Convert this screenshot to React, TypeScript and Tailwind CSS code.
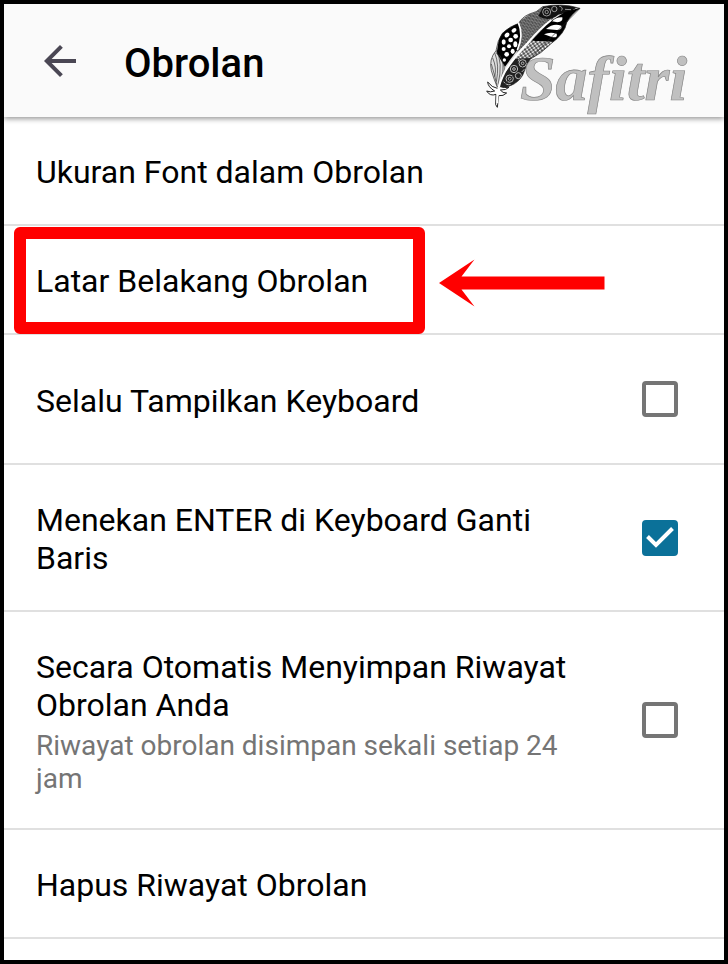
import React from 'react'
import { MdArrowBack } from 'react-icons/md'


interface SettingProps {
  title: string
  children?: React.ReactNode
}

interface CheckSettingProps {
  id: string
  title: string
  note?: string
  checked?: boolean
}

const Logo: React.FC = () => (
  <svg viewBox="36 12 648 339" className="h-[113px] w-[216px] shrink-0" role="img" aria-label="Safitri">
    <defs>
      <pattern id="scales" width="10" height="8" patternUnits="userSpaceOnUse" patternTransform="rotate(-35)">
        <rect width="10" height="8" fill="#444" />
        <ellipse cx="5" cy="4" rx="4" ry="3" fill="#fff" />
      </pattern>
      <pattern id="waves" width="11" height="9" patternUnits="userSpaceOnUse" patternTransform="rotate(15)">
        <rect width="11" height="9" fill="#8c8c8c" />
        <path d="M0 3Q3 -2 6 4T11 3M0 8Q4 4 11 8" fill="none" stroke="#333" strokeWidth="2" />
      </pattern>
      <clipPath id="vane">
        <path d="M330 25Q275 8 218 20Q200 38 178 42Q155 52 146 70Q120 78 97 100Q82 122 78 152Q56 178 64 212Q72 238 82 262L92 265Q140 258 158 226Q165 205 180 178Q215 160 242 132Q285 100 290 68Q305 40 330 25Z" />
      </clipPath>
    </defs>
    {/* feather */}
    <g clipPath="url(#vane)">
      <rect x="40" y="10" width="300" height="270" fill="#dedede" />
      <path d="M218 15L146 65Q158 105 140 158L200 105L250 55Z" fill="url(#waves)" />
      <path d="M145 68L90 95L80 160L105 200L142 150Q158 105 145 68Z" fill="#000" />
      <path d="M340 10L225 10L205 48Q235 68 265 44L300 35Z" fill="#111" />
      <path d="M184 122L238 66L285 36L340 20L300 90L252 126Z" fill="#000" />
      <path d="M184 122L252 126L215 170L175 182L136 176Z" fill="url(#scales)" />
      <path d="M136 176L182 174L165 225L140 260L86 270L96 230Z" fill="#222" />
      <g fill="#fff">
        <ellipse cx="132" cy="91" rx="8" ry="6" transform="rotate(-35 132 91)" />
        <ellipse cx="111" cy="105" rx="8" ry="6" transform="rotate(-45 111 105)" />
        <circle cx="137" cy="109" r="7" />
        <circle cx="122" cy="120" r="7" />
        <ellipse cx="101" cy="126" rx="6" ry="8" />
        <ellipse cx="136" cy="133" rx="6" ry="9" />
        <circle cx="117" cy="139" r="6" />
        <circle cx="101" cy="147" r="6" />
        <ellipse cx="128" cy="154" rx="6" ry="8" />
        <circle cx="110" cy="163" r="7" />
        <circle cx="103" cy="180" r="5" />
        <path d="M246 64Q259 51 277 52Q280 65 262 67Z" />
        <path d="M228 87Q250 68 274 77Q279 89 260 90Z" />
        <path d="M222 103Q240 94 260 101Q264 115 245 111Z" />
      </g>
      <g fill="none" stroke="#999" strokeWidth="3">
        <circle cx="230" cy="36" r="12" />
        <circle cx="230" cy="36" r="5" />
        <circle cx="253" cy="27" r="8" />
        <path d="M267 18Q282 22 274 32M285 28L303 29" />
      </g>
      <g fill="none" stroke="#bbb" strokeWidth="3">
        <circle cx="158" cy="190" r="11" />
        <circle cx="158" cy="190" r="4" />
        <circle cx="132" cy="207" r="11" />
        <circle cx="132" cy="207" r="4" />
        <circle cx="145" cy="227" r="9" />
        <circle cx="119" cy="236" r="11" />
        <circle cx="119" cy="236" r="4" />
        <path d="M144 173Q150 180 145 184M164 207L155 216M101 245Q108 256 122 254" />
      </g>
      <path d="M78 150Q100 186 84 254M74 158Q89 195 79 245M68 174Q81 204 74 230M88 164Q107 190 94 236M64 192Q74 223 82 262M101 193Q108 212 91 250" fill="none" stroke="#333" strokeWidth="2" />
    </g>
    <path d="M330 25Q275 8 218 20Q200 38 178 42Q155 52 146 70Q120 78 97 100Q82 122 78 152Q56 178 64 212Q72 238 82 262M92 265Q140 258 158 226Q165 205 180 178Q215 160 242 132Q285 100 290 68Q305 40 330 25Z" fill="none" stroke="#222" strokeWidth="2" />
    <path d="M145 68Q162 105 142 150" fill="none" stroke="#fff" strokeWidth="5" />
    <path d="M82 265Q66 263 53 246Q54 261 74 273Q60 278 50 273Q60 290 78 283L77 314L82 322L86 287Q100 289 110 279Q98 280 91 270Q108 271 117 262Q104 264 91 260Z" fill="#fff" stroke="#222" strokeWidth="3" />
    <path d="M82 310Q81 265 97 231Q116 188 172 130Q212 84 244 60" fill="none" stroke="#fff" strokeWidth="6" />
    {/* wordmark */}
    <text x="150" y="300" fontFamily="'Liberation Serif', serif" fontStyle="italic" fontWeight="700" fontSize="192" fill="#c0c0c0" stroke="#858585" strokeWidth="2">
      Safitri
    </text>
  </svg>
)

const Setting: React.FC<SettingProps> = ({ title, children }) => (
  <li className="relative border-b-2 border-[#e0e0e0]">
    <button type="button" className="block w-full px-8 pt-9 pb-[33px] text-left">
      {title}
    </button>
    {children}
  </li>
)

const CheckSetting: React.FC<CheckSettingProps> = ({ id, title, note, checked }) => (
  <li className="flex min-h-[130px] items-center gap-12 border-b-2 border-[#e0e0e0] pr-[46px] pl-8">
    <label htmlFor={id} className="flex-1 pt-9 pb-[33px]">
      {title}
      {note && <span className="mt-[5px] block text-[28px] leading-[33px] text-[#757575]">{note}</span>}
    </label>
    <span className="relative size-9 shrink-0">
      <input
        id={id}
        type="checkbox"
        defaultChecked={checked}
        className="peer block size-9 appearance-none rounded border-4 border-[#757575] checked:border-[#0b7199] checked:bg-[#0b7199]"
      />
      <svg viewBox="0 0 36 36" className="pointer-events-none absolute inset-0 hidden size-9 peer-checked:block" aria-hidden="true">
        <path d="M5.5 16.5L14 25L30.5 8.5" fill="none" stroke="#fff" strokeWidth="4" />
      </svg>
    </span>
  </li>
)

export const App: React.FC = () => {
  return (
    <div className="flex min-h-screen flex-col border-4 border-black bg-white font-['Roboto',sans-serif] text-[32px] leading-[38px] text-black">
      <header className="relative flex h-[113px] items-center bg-[#fafafa] pr-[26px] pl-8 shadow-[0_2px_5px_rgba(0,0,0,0.4)]">
        <button type="button" aria-label="Kembali" className="shrink-0 text-[#4a4754]">
          <MdArrowBack size={48} />
        </button>
        <h1 className="flex-1 pt-1.5 pl-10 text-[40px] leading-[48px] font-medium">Obrolan</h1>
        <Logo />
      </header>
      <main>
        <ul>
          <Setting title="Ukuran Font dalam Obrolan" />
          <Setting title="Latar Belakang Obrolan">
            {/* highlight */}
            <div className="pointer-events-none absolute top-px left-2.5 flex items-center gap-3.5">
              <div className="h-[107px] w-[411px] rounded-md border-12 border-[#ff0000]" />
              <svg viewBox="0 0 166 48" className="mt-1 h-12 w-[166px]" aria-hidden="true">
                <path d="M0 24L35.5 0.5L22.5 17.5H165.5V30.5H22.5L35.5 47.5Z" fill="#ff0000" />
              </svg>
            </div>
          </Setting>
          <CheckSetting id="show-keyboard" title="Selalu Tampilkan Keyboard" />
          <CheckSetting id="enter-newline" title="Menekan ENTER di Keyboard Ganti Baris" checked />
          <CheckSetting
            id="save-history"
            title="Secara Otomatis Menyimpan Riwayat Obrolan Anda"
            note="Riwayat obrolan disimpan sekali setiap 24 jam"
          />
          <Setting title="Hapus Riwayat Obrolan" />
        </ul>
      </main>
    </div>
  )
}

export default App
